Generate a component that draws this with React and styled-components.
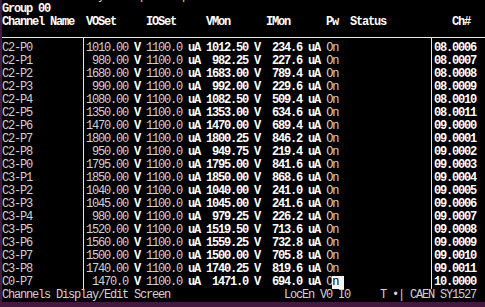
import React from 'react';
import styled, { createGlobalStyle } from 'styled-components';

// Terminal geometry: 6px character cells, 13px lines
const CH = 6;
const LINE = 13;

const GlobalStyle = createGlobalStyle`
  html, body {
    margin: 0;
    padding: 0;
    background: #000;
  }
`;

const Screen = styled.div`
  width: 485px;
  height: 307px;
  box-sizing: border-box;
  background: #000;
  border-left: 2px solid #45183f;
  border-bottom: 5px solid #45183f;
  overflow: hidden;
  display: flex;
  flex-direction: column;
  font-family: "Liberation Mono", "DejaVu Sans Mono", monospace;
  font-size: 12px;
  letter-spacing: -1.2px;
  color: #d2d2d2;
`;

const MenuBar = styled.div`
  height: 3px;
  overflow: hidden;
  display: flex;
  align-items: flex-end;
  flex-shrink: 0;
`;

const Line = styled.div`
  height: ${LINE}px;
  line-height: ${LINE}px;
  white-space: pre;
  flex-shrink: 0;
  font-weight: ${p => (p.$bold ? 700 : 400)};
  color: ${p => (p.$bold ? '#fff' : 'inherit')};
`;

const Table = styled.div`
  display: flex;
  flex-direction: column;
`;

const Row = styled.div`
  display: grid;
  grid-template-columns: ${13 * CH}px ${CH}px ${57 * CH}px ${CH}px 1fr;
  height: ${LINE}px;
  line-height: ${LINE}px;
  white-space: pre;
  position: relative;
`;

const RuleRow = styled(Row)`
  &::before {
    content: '';
    position: absolute;
    left: 0;
    right: 0;
    top: 8px;
    height: 1px;
    background: #e8e8e8;
  }
`;

const Sep = styled.div`
  position: relative;
  &::after {
    content: '';
    position: absolute;
    left: 3px;
    width: 1px;
    top: ${p => p.$top || 0}px;
    bottom: 0;
    background: #e8e8e8;
  }
`;

const Cell = styled.div`
  overflow: hidden;
`;

const B = styled.span`
  font-weight: 700;
  color: #fff;
`;

const Cursor = styled.span`
  background: #f4f4f4;
  color: #000;
`;

const pad = (s, n) => String(s).padStart(n, ' ');

const ROWS = [
  ['C2-P0', '1010.00', '1012.50', '234.6', '08.0006'],
  ['C2-P1', '980.00', '982.25', '227.6', '08.0007'],
  ['C2-P2', '1680.00', '1683.00', '789.4', '08.0008'],
  ['C2-P3', '990.00', '992.00', '229.6', '08.0009'],
  ['C2-P4', '1080.00', '1082.50', '509.4', '08.0010'],
  ['C2-P5', '1350.00', '1353.00', '634.6', '08.0011'],
  ['C2-P6', '1470.00', '1470.00', '689.4', '09.0000'],
  ['C2-P7', '1800.00', '1800.25', '846.2', '09.0001'],
  ['C2-P8', '950.00', '949.75', '219.4', '09.0002'],
  ['C3-P0', '1795.00', '1795.00', '841.6', '09.0003'],
  ['C3-P1', '1850.00', '1850.00', '868.6', '09.0004'],
  ['C3-P2', '1040.00', '1040.00', '241.0', '09.0005'],
  ['C3-P3', '1045.00', '1045.00', '241.6', '09.0006'],
  ['C3-P4', '980.00', '979.25', '226.2', '09.0007'],
  ['C3-P5', '1520.00', '1519.50', '713.6', '09.0008'],
  ['C3-P6', '1560.00', '1559.25', '732.8', '09.0009'],
  ['C3-P7', '1500.00', '1500.00', '705.8', '09.0010'],
  ['C3-P8', '1740.00', '1740.25', '819.6', '09.0011'],
  ['C0-P7', '1470.0', '1471.0', '694.0', '10.0000', true],
];

const at = (parts) => {
  // builds a line from [column, text] pairs
  let out = '';
  parts.forEach(([col, text]) => {
    out = out.padEnd(col, ' ') + text;
  });
  return out;
};

const MENU = at([[3, 'Main'], [10, 'Utility'], [19, 'Setup'], [26, 'Groups'], [35, 'View'], [75, 'User']]);
const HEADER = at([[0, 'Channel Name'], [14, 'VOSet'], [24, 'IOSet'], [34, 'VMon'], [44, 'IMon'], [54, 'Pw'], [58, 'Status'], [75, 'Ch#']]);
const STATUS = at([[0, 'Channels Display/Edit Screen'], [47, 'LocEn V0 I0'], [63, 'T'], [65, '\u2022'], [66, '|'], [68, 'CAEN SY1527']]);

const ChannelRow = ({ name, vset, vmon, imon, ch, cursor }) => (
  <Row>
    <Cell>{name}</Cell>
    <Sep />
    <Cell>
      {pad(vset, 7)}
      <B> V </B>
      1100.0
      <B> uA {pad(vmon, 7)} V  {pad(imon, 5)} uA </B>
      {cursor ? (
        <>
          O<Cursor>n </Cursor>
        </>
      ) : (
        'On'
      )}
    </Cell>
    <Sep />
    <Cell>
      <B>{ch}</B>
    </Cell>
  </Row>
);

export default function App() {
  return (
    <>
      <GlobalStyle />
      <Screen>
        <MenuBar>
          <Line>{MENU}</Line>
        </MenuBar>
        <Line $bold>Group 00</Line>
        <Line $bold>{HEADER}</Line>
        <Table>
          <RuleRow>
            <Cell />
            <Sep $top={8} />
            <Cell />
            <Sep $top={8} />
            <Cell />
          </RuleRow>
          {ROWS.map(([name, vset, vmon, imon, ch, cursor]) => (
            <ChannelRow key={name} name={name} vset={vset} vmon={vmon} imon={imon} ch={ch} cursor={cursor} />
          ))}
        </Table>
        <Line>{STATUS}</Line>
      </Screen>
    </>
  );
}
